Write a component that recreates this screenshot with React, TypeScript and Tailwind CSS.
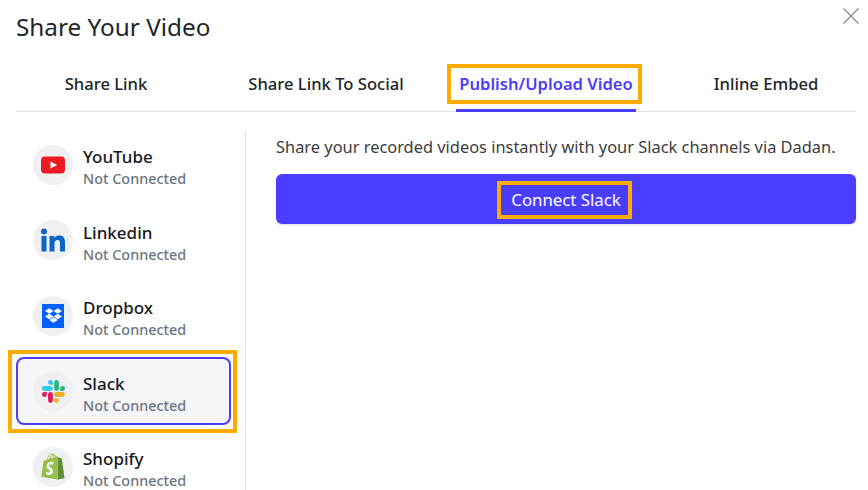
import { FaDropbox, FaShopify } from "react-icons/fa";

function Slack() {
  return (
    <svg width="23" height="23" viewBox="0 0 24 24">
      <path fill="#E01E5A" d="M5.042 15.165a2.528 2.528 0 0 1-2.52 2.523A2.528 2.528 0 0 1 0 15.165a2.527 2.527 0 0 1 2.522-2.52h2.52v2.52zM6.313 15.165a2.527 2.527 0 0 1 2.521-2.52 2.527 2.527 0 0 1 2.521 2.52v6.313A2.528 2.528 0 0 1 8.834 24a2.528 2.528 0 0 1-2.521-2.522v-6.313z" />
      <path fill="#36C5F0" d="M8.834 5.042a2.528 2.528 0 0 1-2.521-2.52A2.528 2.528 0 0 1 8.834 0a2.528 2.528 0 0 1 2.521 2.522v2.52H8.834zM8.834 6.313a2.528 2.528 0 0 1 2.521 2.521 2.528 2.528 0 0 1-2.521 2.521H2.522A2.528 2.528 0 0 1 0 8.834a2.528 2.528 0 0 1 2.522-2.521h6.312z" />
      <path fill="#2EB67D" d="M18.956 8.834a2.528 2.528 0 0 1 2.522-2.521A2.528 2.528 0 0 1 24 8.834a2.528 2.528 0 0 1-2.522 2.521h-2.522V8.834zM17.688 8.834a2.528 2.528 0 0 1-2.523 2.521 2.527 2.527 0 0 1-2.52-2.521V2.522A2.527 2.527 0 0 1 15.165 0a2.528 2.528 0 0 1 2.523 2.522v6.312z" />
      <path fill="#ECB22E" d="M15.165 18.956a2.528 2.528 0 0 1 2.523 2.522A2.528 2.528 0 0 1 15.165 24a2.527 2.527 0 0 1-2.52-2.522v-2.522h2.52zM15.165 17.688a2.527 2.527 0 0 1-2.52-2.523 2.526 2.526 0 0 1 2.52-2.52h6.313A2.527 2.527 0 0 1 24 15.165a2.528 2.528 0 0 1-2.522 2.523h-6.313z" />
    </svg>
  );
}

function YouTube() {
  return (
    <svg width="26" height="20" viewBox="0 0 26 20">
      <rect x="1" y="1.5" width="24" height="17" rx="4" fill="#ED1C24" />
      <path d="M10.5 6.5 L17 10 L10.5 13.5 Z" fill="#fff" />
    </svg>
  );
}

function LinkedIn() {
  return (
    <svg width="26" height="26" viewBox="0 0 26 26">
      <circle cx="4" cy="4.5" r="3" fill="#0A66C2" />
      <rect x="1.5" y="9" width="5" height="15.5" fill="#0A66C2" />
      <path d="M9.5 9h4.7v2.2c.8-1.5 2.4-2.6 4.8-2.6 4.3 0 6 2.7 6 6.8v9.1h-5v-8.2c0-2-.6-3.3-2.4-3.3-2 0-3.1 1.4-3.1 3.4v8.1h-5z" fill="#0A66C2" />
    </svg>
  );
}

function Dropbox() {
  return (
    <div className="flex h-[24px] w-[22px] items-center justify-center bg-[#0061FF]">
      <FaDropbox className="text-[17px] text-white" />
    </div>
  );
}

function Shopify() {
  return (
    <div className="relative h-[27px] w-[24px]">
      <FaShopify className="h-[27px] w-[24px] text-[#95BF47]" />
      <FaShopify className="absolute left-0 top-0 h-[27px] w-[24px] text-[#5E8E3E] [clip-path:inset(0_0_0_68%)]" />
    </div>
  );
}

const items = [
  { name: "YouTube", icon: <YouTube /> },
  { name: "Linkedin", icon: <LinkedIn /> },
  { name: "Dropbox", icon: <Dropbox /> },
  { name: "Slack", icon: <Slack />, active: true },
  { name: "Shopify", icon: <Shopify /> },
];

const tabs = ["Share Link", "Share Link To Social", "Publish/Upload Video", "Inline Embed"];

export default function App() {
  return (
    <div className="relative h-[490px] w-[868px] overflow-hidden bg-white pl-4 pr-3 font-['Noto_Sans',sans-serif] text-[#212529]">
      <button className="absolute right-[9px] top-[8px] text-[#8a8a8a]">
        <svg width="16" height="16" viewBox="0 0 16 16" stroke="currentColor" strokeWidth="1.3" fill="none">
          <path d="M0.5 0.5 L15.5 15.5 M15.5 0.5 L0.5 15.5" />
        </svg>
      </button>

      <h1 className="h-[55px] pt-[8.5px] text-[24.3px] leading-[36px] font-normal">Share Your Video</h1>

      <div className="flex h-[57px] justify-between border-b border-[#e3e3e3]">
        {tabs.map((t) => {
          const active = t === "Publish/Upload Video";
          return (
            <div
              key={t}
              className={`-mb-px flex h-[57px] w-[180px] items-center justify-center border-b-[3px] pt-[3px] text-[16.6px] ${active ? "border-[#4a3dff] font-semibold text-[#4a3dff]" : "border-transparent font-medium"}`}
            >
              <span
                className={`flex shrink-0 items-center justify-center whitespace-nowrap pt-[2px] ${active ? "mr-[3px] h-[40px] w-[195px] border-[4px] border-[#ffab00] pl-[3px]" : ""}`}
              >
                {t}
              </span>
            </div>
          );
        })}
      </div>

      <div className="flex pt-[20px]">
        <div className="flex h-[400px] w-[230px] shrink-0 flex-col border-r border-[#e3e3e3] pr-[14px]">
          {items.map((it) => (
            <div
              key={it.name}
              className={`relative mb-[7.5px] flex h-[68px] shrink-0 items-center gap-[10px] rounded-[8px] border-2 pl-[15px] first:-mt-[1.3px] ${it.active ? "border-[#4a3dff] bg-[#f5f5fa]" : "border-transparent"}`}
            >
              {it.active && (
                <div className="pointer-events-none absolute -bottom-[10px] -left-[10px] -right-[8px] -top-[9px] border-[4px] border-[#ffab00]" />
              )}
              <div className="flex h-[40px] w-[40px] shrink-0 items-center justify-center rounded-full bg-[#f0f0f3]">
                {it.icon}
              </div>
              <div className="flex flex-col pt-[6px]">
                <span className="text-[17px] leading-[22.6px] font-medium text-[#16181d]">{it.name}</span>
                <span className="text-[14.4px] leading-[20px] font-medium text-[#6b7480]">Not Connected</span>
              </div>
            </div>
          ))}
        </div>
        <div className="flex-1 pl-[30px]">
          <p className="whitespace-nowrap text-[16.4px] leading-[30px] text-[#3c3c3c]">
            Share your recorded videos instantly with your Slack channels via Dadan.
          </p>
          <button className="mt-[12px] flex h-[50px] w-full items-center justify-center rounded-[6px] bg-[#4a3dff] text-[16.8px] text-white shadow-sm">
            <span className="mr-[3px] mt-[2px] flex h-[38px] w-[135px] items-center justify-center border-[4px] border-[#ffab00] pl-[3px]">
              Connect Slack
            </span>
          </button>
        </div>
      </div>
    </div>
  );
}
